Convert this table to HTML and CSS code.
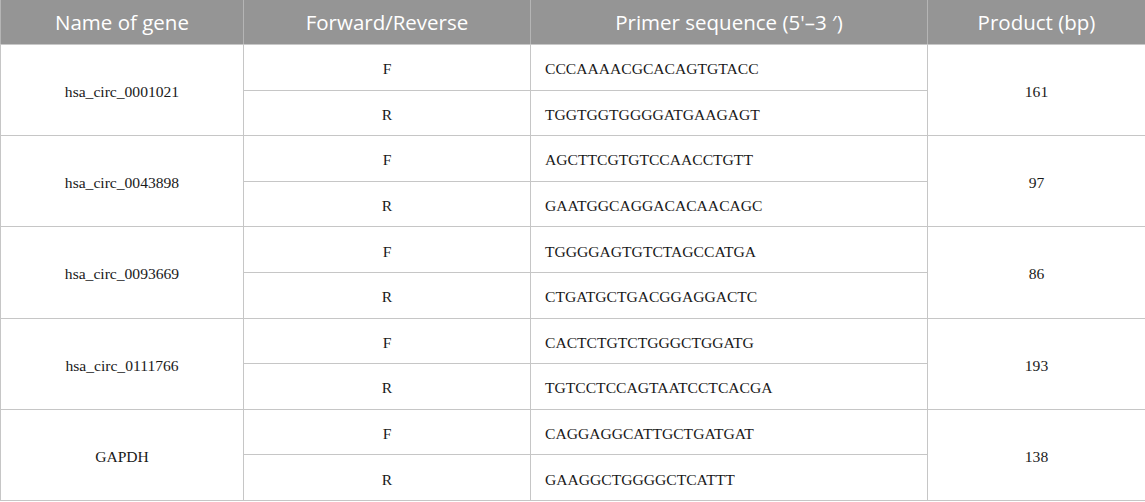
FILE: index.html
```html
<!DOCTYPE html>
<html>
<head>
<meta charset="utf-8">
<link rel="stylesheet" href="styles.css">
</head>
<body>
<table class="primers">
  <colgroup>
    <col class="c1"><col class="c2"><col class="c3"><col class="c4">
  </colgroup>
  <thead>
    <tr>
      <th>Name of gene</th>
      <th>Forward/Reverse</th>
      <th>Primer sequence (5'–3 ′)</th>
      <th>Product (bp)</th>
    </tr>
  </thead>
  <tbody>
    <tr><td rowspan="2">hsa_circ_0001021</td><td>F</td><td class="seq">CCCAAAACGCACAGTGTACC</td><td rowspan="2">161</td></tr>
    <tr><td>R</td><td class="seq">TGGTGGTGGGGATGAAGAGT</td></tr>
    <tr><td rowspan="2">hsa_circ_0043898</td><td>F</td><td class="seq">AGCTTCGTGTCCAACCTGTT</td><td rowspan="2">97</td></tr>
    <tr><td>R</td><td class="seq">GAATGGCAGGACACAACAGC</td></tr>
    <tr><td rowspan="2">hsa_circ_0093669</td><td>F</td><td class="seq">TGGGGAGTGTCTAGCCATGA</td><td rowspan="2">86</td></tr>
    <tr><td>R</td><td class="seq">CTGATGCTGACGGAGGACTC</td></tr>
    <tr><td rowspan="2">hsa_circ_0111766</td><td>F</td><td class="seq">CACTCTGTCTGGGCTGGATG</td><td rowspan="2">193</td></tr>
    <tr><td>R</td><td class="seq">TGTCCTCCAGTAATCCTCACGA</td></tr>
    <tr><td rowspan="2">GAPDH</td><td>F</td><td class="seq">CAGGAGGCATTGCTGATGAT</td><td rowspan="2">138</td></tr>
    <tr><td>R</td><td class="seq">GAAGGCTGGGGCTCATTT</td></tr>
  </tbody>
</table>
</body>
</html>
```
FILE: styles.css
```css
html, body {
  margin: 0;
  padding: 0;
  background: #ffffff;
}

.primers {
  width: 1145px;
  table-layout: fixed;
  border-collapse: collapse;
  font-family: "Liberation Serif", "Times New Roman", serif;
  font-size: 15.6px;
  color: #1a1a1a;
}

.c1 { width: 243px; }
.c2 { width: 287px; }
.c3 { width: 397px; }
.c4 { width: 218px; }

.primers th {
  height: 44px;
  padding: 0 8px;
  background: #959595;
  color: #ffffff;
  font-family: "Open Sans", "Liberation Sans", sans-serif;
  font-weight: 400;
  font-size: 20.5px;
  text-align: center;
  border-left: 1px solid #b5b5b5;
  border-right: 1px solid #b5b5b5;
  border-bottom: 1px solid #c8c8c8;
}

.primers td {
  height: 45.6px;
  padding: 4px 14px 0;
  box-sizing: border-box;
  text-align: center;
  vertical-align: middle;
  border: 1px solid #c6c6c6;
}

.primers td.seq {
  text-align: left;
}
```
